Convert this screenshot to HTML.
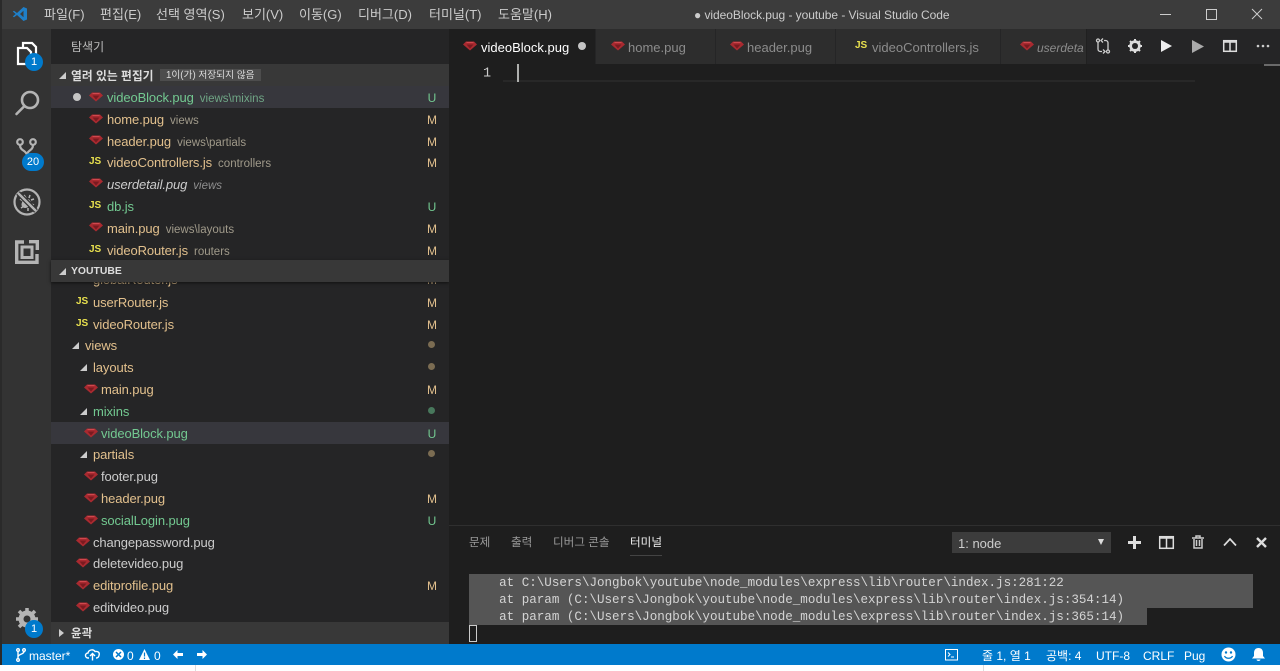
<!DOCTYPE html>
<html lang="ko"><head><meta charset="utf-8"><title>videoBlock.pug - youtube</title>
<style>
html,body{margin:0;padding:0;width:1280px;height:671px;overflow:hidden;background:#fff}
body{position:relative;font-family:"Liberation Sans","Noto Sans CJK KR",sans-serif;font-size:13px;color:#ccc}
.a{position:absolute}
.t{position:absolute;white-space:nowrap;line-height:18px}
.m{position:absolute;top:6px;font-size:13px;line-height:18px;color:#ccc;white-space:nowrap}
.r{position:absolute;left:51px;width:398px;height:22px}
.r .n{position:absolute;top:3px;line-height:18px;font-size:13px;white-space:nowrap;letter-spacing:-.1px}
.r .d{font-size:11.5px;color:#98907f;margin-left:6px;letter-spacing:0}
.r .s{position:absolute;left:375px;top:3px;line-height:18px;font-size:12px;width:12px;text-align:center}
.y{color:#e2c08d}.g{color:#73c991}.w{color:#ccc}
.o{color:#e2c08d}.o .d{color:#a09a8a}
.g .d{color:#6fa585}
.dot{position:absolute;left:377px;top:7px;width:7px;height:7px;border-radius:50%;background:#7b6c52}
.gem{position:absolute;width:14px;height:10px}
.js{position:absolute;font:bold 10px/12px "Liberation Sans",sans-serif;color:#e8e04e}
.tri{position:absolute;width:0;height:0;border-style:solid;border-width:0 0 7px 7px;border-color:transparent transparent #ccc transparent}
.b{position:absolute;background:#007acc;color:#fff;border-radius:50%;text-align:center;font-size:11px;line-height:18px;width:18px;height:18px}
.tab{position:absolute;top:29px;height:35px;background:#2d2d2d;border-right:1px solid #252526;box-sizing:border-box}
.tab span{position:absolute;top:9px;line-height:18px;font-size:13px;color:#8c8c8c;white-space:nowrap}
.term{position:absolute;left:469px;font:12.56px/17px "Liberation Mono","DejaVu Sans Mono",monospace;color:#d4d4d4;white-space:pre;background:#555;height:17px}
.st{position:absolute;top:3px;line-height:18px;color:#fff;font-size:12px;white-space:nowrap}
.lb{top:534px;font-size:11.6px;color:#999}
svg{position:absolute;overflow:visible}
</style></head><body>
<svg width="0" height="0" style="position:absolute"><defs>
<symbol id="gem" viewBox="0 0 14 10"><path d="M3 .5h8L14 3.500 7 9.500 0 3.500z" fill="#a92a30"/><path d="M3.500 3.500h7L7 7.500z" fill="#7a1a20"/><path d="M3.500 1.500h7" stroke="#d0484e" stroke-width="1"/></symbol>
</defs></svg>

<div class="a" style="left:0;top:0;width:2px;height:665px;background:#2a2a2a"></div>
<!-- titlebar -->
<div class="a" style="left:2px;top:0;width:1278px;height:29px;background:#3c3c3c"></div>
<svg style="left:12px;top:6px" width="16" height="16" viewBox="0 0 16 16"><path d="M11.500 1L15 2.500v11L11.500 15 5 9l-3 2.300L.8 10.500 3.600 8 .8 5.500 2 4.700 5 7zM11.500 4.700L8 8l3.500 3.300z" fill="#1f7fc8"/></svg>
<div class="m" style="left:44px">파일(F)</div>
<div class="m" style="left:100px">편집(E)</div>
<div class="m" style="left:156px">선택 영역(S)</div>
<div class="m" style="left:242px">보기(V)</div>
<div class="m" style="left:299px">이동(G)</div>
<div class="m" style="left:358px">디버그(D)</div>
<div class="m" style="left:429px">터미널(T)</div>
<div class="m" style="left:498px">도움말(H)</div>
<div class="m" style="left:694px;font-size:12px;letter-spacing:-.05px">● videoBlock.pug - youtube - Visual Studio Code</div>
<div class="a" style="left:1160px;top:14px;width:11px;height:1px;background:#ccc"></div>
<div class="a" style="left:1206px;top:9px;width:9px;height:9px;border:1px solid #ccc"></div>
<svg style="left:1251px;top:8px" width="12" height="12"><path d="M1 1l10 10M11 1L1 11" stroke="#ccc" fill="none"/></svg>

<!-- activity bar -->
<div class="a" style="left:2px;top:29px;width:49px;height:615px;background:#333"></div>
<svg style="left:16px;top:41px" width="22" height="26" viewBox="0 0 22 26" fill="none" stroke="#fff" stroke-width="2.200"><path d="M2 7h9l4 4v12H2z"/><path d="M7 6V2h9l4 4v12h-4"/></svg>
<div class="b" style="left:25px;top:53px">1</div>
<svg style="left:14px;top:89px" width="26" height="28" viewBox="0 0 26 28" fill="none" stroke="#b4b4b4" stroke-width="2.600"><circle cx="16" cy="11" r="8"/><path d="M10.500 17L2.500 25" stroke-linecap="round"/></svg>
<svg style="left:15px;top:137px" width="24" height="26" viewBox="0 0 24 26" fill="none" stroke="#b4b4b4" stroke-width="2.200"><circle cx="5" cy="5" r="2.800"/><circle cx="18" cy="5" r="2.800"/><path d="M5 8c0 6 6 5 7 10M18 8c0 6-6 5-6 10"/></svg>
<div class="b" style="left:22px;top:153px;width:22px;height:18px;border-radius:9px">20</div>
<svg style="left:13px;top:188px" width="28" height="28" viewBox="0 0 28 28" fill="none" stroke="#b4b4b4" stroke-width="2.200"><circle cx="14" cy="14" r="12.500"/><ellipse cx="13" cy="15.500" rx="5" ry="4" fill="#b4b4b4" stroke="none" transform="rotate(-45 13 15.500)"/><path d="M17 7l-1 3M21 11l-3 1M7 11l3 2M8 20l3-2M15 23l0-3M21 17l-3-1M11 7l2 3" stroke-width="1.500"/><path d="M5 5l18 18" stroke="#333" stroke-width="5"/><path d="M5 5l18 18" stroke-width="2.400"/></svg>
<svg style="left:15px;top:240px" width="24" height="24" viewBox="0 0 24 24" fill="none" stroke="#b4b4b4" stroke-width="3.400"><path d="M9 2H1.700v20.300h20.300V14"/><path d="M14 1.700h8.300V10"/><rect x="7" y="7" width="10" height="10.500" stroke-width="3"/></svg>
<svg style="left:16px;top:608px" width="22" height="22" viewBox="0 0 22 22"><circle cx="11" cy="11" r="6.500" fill="none" stroke="#b4b4b4" stroke-width="4"/><path d="M11 0v22M0 11h22M3 3l16 16M19 3L3 19" stroke="#b4b4b4" stroke-width="3.500"/><circle cx="11" cy="11" r="3.500" fill="#333"/></svg>
<div class="b" style="left:25px;top:620px">1</div>

<!-- sidebar -->
<div class="a" style="left:51px;top:29px;width:398px;height:615px;background:#252526"></div>
<div class="t" style="left:71px;top:38px;font-size:12px;color:#bbb">탐색기</div>
<div class="a" style="left:51px;top:64px;width:398px;height:22px;background:#383838"></div>
<div class="tri" style="left:59px;top:72px"></div>
<div class="t" style="left:71px;top:67px;font-size:11.800px;font-weight:bold;color:#ddd">열려 있는 편집기</div>
<div class="a" style="left:160px;top:69px;width:101px;height:12px;background:#4d4d4d"></div>
<div class="t" style="left:166px;top:67px;font-size:9.700px;color:#ddd">1이(가) 저장되지 않음</div>

<div class="r" style="top:86px;background:#37373d"><div class="a" style="left:22px;top:7px;width:8px;height:8px;border-radius:50%;background:#c5c5c5"></div><svg class="gem" style="left:38px;top:6px"><use href="#gem" width="14" height="10"/></svg><div class="n g" style="left:56px">videoBlock.pug<span class="d">views\mixins</span></div><div class="s g">U</div></div>
<div class="r" style="top:108px"><svg class="gem" style="left:38px;top:6px"><use href="#gem" width="14" height="10"/></svg><div class="n o" style="left:56px">home.pug<span class="d">views</span></div><div class="s y">M</div></div>
<div class="r" style="top:130px"><svg class="gem" style="left:38px;top:5px"><use href="#gem" width="14" height="10"/></svg><div class="n o" style="left:56px">header.pug<span class="d">views\partials</span></div><div class="s y">M</div></div>
<div class="r" style="top:151px"><div class="js" style="left:38px;top:5px">JS</div><div class="n o" style="left:56px">videoControllers.js<span class="d">controllers</span></div><div class="s y">M</div></div>
<div class="r" style="top:173px"><svg class="gem" style="left:38px;top:5px"><use href="#gem" width="14" height="10"/></svg><div class="n w" style="left:56px;font-style:italic">userdetail.pug<span class="d" style="color:#8f8f8f">views</span></div></div>
<div class="r" style="top:195px"><div class="js" style="left:38px;top:5px">JS</div><div class="n g" style="left:56px">db.js</div><div class="s g">U</div></div>
<div class="r" style="top:217px"><svg class="gem" style="left:38px;top:5px"><use href="#gem" width="14" height="10"/></svg><div class="n o" style="left:56px">main.pug<span class="d">views\layouts</span></div><div class="s y">M</div></div>
<div class="r" style="top:239px"><div class="js" style="left:38px;top:5px">JS</div><div class="n o" style="left:56px">videoRouter.js<span class="d">routers</span></div><div class="s y">M</div></div>

<div class="r" style="top:270px;height:18px;overflow:hidden"><div class="js" style="left:25px;top:4px">JS</div><div class="n o" style="left:42px;top:1px">globalRouter.js</div><div class="s y" style="top:1px">M</div></div>
<div class="r" style="top:291px"><div class="js" style="left:25px;top:5px">JS</div><div class="n o" style="left:42px">userRouter.js</div><div class="s y">M</div></div>
<div class="r" style="top:313px"><div class="js" style="left:25px;top:5px">JS</div><div class="n o" style="left:42px">videoRouter.js</div><div class="s y">M</div></div>
<div class="r" style="top:334px"><div class="tri" style="left:21px;top:8px"></div><div class="n o" style="left:34px">views</div><div class="dot"></div></div>
<div class="r" style="top:356px"><div class="tri" style="left:29px;top:8px"></div><div class="n o" style="left:42px">layouts</div><div class="dot"></div></div>
<div class="r" style="top:378px"><svg class="gem" style="left:33px;top:6px"><use href="#gem" width="14" height="10"/></svg><div class="n o" style="left:50px">main.pug</div><div class="s y">M</div></div>
<div class="r" style="top:400px"><div class="tri" style="left:29px;top:8px"></div><div class="n g" style="left:42px">mixins</div><div class="dot" style="background:#48785c"></div></div>
<div class="r" style="top:422px;background:#37373d"><svg class="gem" style="left:33px;top:6px"><use href="#gem" width="14" height="10"/></svg><div class="n g" style="left:50px">videoBlock.pug</div><div class="s g">U</div></div>
<div class="r" style="top:443px"><div class="tri" style="left:29px;top:8px"></div><div class="n o" style="left:42px">partials</div><div class="dot"></div></div>
<div class="r" style="top:465px"><svg class="gem" style="left:33px;top:6px"><use href="#gem" width="14" height="10"/></svg><div class="n w" style="left:50px">footer.pug</div></div>
<div class="r" style="top:487px"><svg class="gem" style="left:33px;top:6px"><use href="#gem" width="14" height="10"/></svg><div class="n o" style="left:50px">header.pug</div><div class="s y">M</div></div>
<div class="r" style="top:509px"><svg class="gem" style="left:33px;top:6px"><use href="#gem" width="14" height="10"/></svg><div class="n g" style="left:50px">socialLogin.pug</div><div class="s g">U</div></div>
<div class="r" style="top:531px"><svg class="gem" style="left:25px;top:6px"><use href="#gem" width="14" height="10"/></svg><div class="n w" style="left:42px">changepassword.pug</div></div>
<div class="r" style="top:552px"><svg class="gem" style="left:25px;top:6px"><use href="#gem" width="14" height="10"/></svg><div class="n w" style="left:42px">deletevideo.pug</div></div>
<div class="r" style="top:574px"><svg class="gem" style="left:25px;top:6px"><use href="#gem" width="14" height="10"/></svg><div class="n o" style="left:42px">editprofile.pug</div><div class="s y">M</div></div>
<div class="r" style="top:596px"><svg class="gem" style="left:25px;top:6px"><use href="#gem" width="14" height="10"/></svg><div class="n w" style="left:42px">editvideo.pug</div></div>

<div class="a" style="left:51px;top:260px;width:398px;height:22px;background:#383838;box-shadow:0 1px 3px #111"></div>
<div class="tri" style="left:59px;top:268px"></div>
<div class="t" style="left:71px;top:263px;font-size:10.400px;font-weight:bold;color:#ddd">YOUTUBE</div>
<div class="a" style="left:51px;top:622px;width:398px;height:22px;background:#383838"></div>
<div class="a" style="left:59px;top:629px;width:0;height:0;border-style:solid;border-width:4px 0 4px 5px;border-color:transparent transparent transparent #ccc"></div>
<div class="t" style="left:71px;top:625px;font-size:11.500px;font-weight:bold;color:#ddd">윤곽</div>

<!-- editor -->
<div class="a" style="left:449px;top:29px;width:831px;height:615px;background:#1e1e1e"></div>
<div class="a" style="left:449px;top:29px;width:831px;height:35px;background:#252526"></div>
<div class="tab" style="left:449px;width:147px;background:#1e1e1e"><svg class="gem" style="left:14px;top:12px"><use href="#gem" width="14" height="10"/></svg><span style="left:32px;top:10px;color:#fff">videoBlock.pug</span><div class="a" style="left:129px;top:13px;width:8px;height:8px;border-radius:50%;background:#c5c5c5"></div></div>
<div class="tab" style="left:596px;width:120px"><svg class="gem" style="left:15px;top:12px"><use href="#gem" width="14" height="10"/></svg><span style="left:32px;top:10px">home.pug</span></div>
<div class="tab" style="left:716px;width:120px"><svg class="gem" style="left:14px;top:12px"><use href="#gem" width="14" height="10"/></svg><span style="left:31px;top:10px">header.pug</span></div>
<div class="tab" style="left:836px;width:165px"><div class="js" style="left:19px;top:11px">JS</div><span style="left:36px;top:10px">videoControllers.js</span></div>
<div class="tab" style="left:1001px;width:100px;overflow:hidden"><svg class="gem" style="left:19px;top:12px"><use href="#gem" width="14" height="10"/></svg><span style="left:36px;top:10px;font-style:italic;font-size:12px">userdeta</span></div>
<div class="a" style="left:1086px;top:29px;width:194px;height:35px;background:#252526"></div>
<svg style="left:1095px;top:38px" width="16" height="16" viewBox="0 0 16 16" fill="none" stroke="#ccc" stroke-width="1.300"><circle cx="3" cy="2.500" r="1.500"/><circle cx="13" cy="13.500" r="1.500"/><path d="M3 4v7c0 1.500 1 2.500 2.500 2.500H7M13 12V5c0-1.500-1-2.500-2.500-2.500H9M8 .5l-2 2 2 2M8 11.500l2 2-2 2"/></svg>
<svg style="left:1128px;top:39px" width="14" height="14" viewBox="0 0 14 14"><circle cx="7" cy="7" r="4.500" fill="none" stroke="#ddd" stroke-width="2.500"/><path d="M7 0v14M0 7h14M2 2l10 10M12 2L2 12" stroke="#ddd" stroke-width="2"/><circle cx="7" cy="7" r="3" fill="#252526"/></svg>
<svg style="left:1161px;top:40px" width="11" height="12"><path d="M0 0l11 6-11 6z" fill="#eee"/></svg>
<svg style="left:1192px;top:40px" width="12" height="13"><path d="M0 0l12 6.500L0 13z" fill="#aaa"/></svg>
<svg style="left:1223px;top:40px" width="14" height="12" fill="none" stroke="#ddd" stroke-width="1.500"><rect x=".7" y=".7" width="12.600" height="10.600"/><path d="M7 1v10M1 2h12"/></svg>
<svg style="left:1256px;top:44px" width="14" height="4"><circle cx="2" cy="2" r="1.300" fill="#ccc"/><circle cx="7" cy="2" r="1.300" fill="#ccc"/><circle cx="12" cy="2" r="1.300" fill="#ccc"/></svg>
<div class="a" style="left:1086px;top:29px;width:1px;height:35px;background:#202020"></div>
<div class="t" style="left:483px;top:64px;font:13.500px/18px 'Liberation Mono',monospace;color:#ccc;padding-top:0;transform:translateY(1.500px)">1</div>
<div class="a" style="left:503px;top:64px;width:692px;height:18px;box-sizing:border-box;border-bottom:2px solid #282828"></div>
<div class="a" style="left:517px;top:64px;width:1.500px;height:18px;background:#aeafad"></div>
<div class="a" style="left:1264px;top:64px;width:16px;height:2px;background:#6a6a6a"></div>

<!-- panel -->
<div class="a" style="left:449px;top:525px;width:831px;height:1px;background:#2f2f2f"></div>
<div class="t lb" style="left:469px">문제</div>
<div class="t lb" style="left:511px">출력</div>
<div class="t lb" style="left:553px">디버그 콘솔</div>
<div class="t lb" style="left:630px;color:#eee">터미널</div>
<div class="a" style="left:630px;top:555px;width:32px;height:1px;background:#444"></div>
<div class="a" style="left:952px;top:532px;width:159px;height:21px;background:#3c3c3c"></div>
<div class="t" style="left:958px;top:535px;font-size:13px;color:#ccc">1: node</div>
<div class="a" style="left:1098px;top:539px;width:0;height:0;border-style:solid;border-width:6px 3.500px 0 3.500px;border-color:#ddd transparent transparent transparent"></div>
<svg style="left:1128px;top:536px" width="13" height="13"><path d="M6.500 0v13M0 6.500h13" stroke="#ddd" stroke-width="3"/></svg>
<svg style="left:1159px;top:536px" width="15" height="13" fill="none" stroke="#ddd" stroke-width="1.500"><rect x=".7" y=".7" width="13.600" height="11.600"/><path d="M7.500 1v11M1 2h13"/></svg>
<svg style="left:1192px;top:535px" width="12" height="14" fill="none" stroke="#ccc" stroke-width="1.500"><path d="M2 4v9h8V4M0 3h12M4 3V1h4v2M4.500 5v6M7.500 5v6"/></svg>
<svg style="left:1223px;top:537px" width="14" height="10" fill="none" stroke="#ddd" stroke-width="1.700"><path d="M1 8.500L7 2l6 6.500"/></svg>
<svg style="left:1256px;top:537px" width="11" height="11"><path d="M1 1l9 9M10 1l-9 9" stroke="#ddd" stroke-width="2.400"/></svg>

<div class="term" style="top:574px;width:784px;line-height:19px">    at C:\Users\Jongbok\youtube\node_modules\express\lib\router\index.js:281:22</div>
<div class="term" style="top:591px;width:784px;line-height:19px">    at param (C:\Users\Jongbok\youtube\node_modules\express\lib\router\index.js:354:14)</div>
<div class="term" style="top:608px;width:678px;line-height:19px">    at param (C:\Users\Jongbok\youtube\node_modules\express\lib\router\index.js:365:14)</div>
<div class="a" style="left:469px;top:625px;width:6px;height:15px;border:1px solid #ccc"></div>

<!-- status bar -->
<div class="a" style="left:2px;top:644px;width:1278px;height:21px;background:#007acc"></div>
<svg style="left:16px;top:648px" width="10" height="14" fill="none" stroke="#fff" stroke-width="1.400"><circle cx="2" cy="2" r="1.300"/><circle cx="8" cy="2" r="1.300"/><circle cx="2" cy="12" r="1.300"/><path d="M2 3.500v7M8 3.500c0 3-6 2.500-6 5.500"/></svg>
<div class="st" style="left:29px;top:647px">master*</div>
<svg style="left:85px;top:648px" width="15" height="13" fill="none" stroke="#fff" stroke-width="1.400"><path d="M4 10H3a2.500 2.500 0 0 1 0-5c.5-3 5-4.500 7-1.500 3-.5 5 1 4 4-.3 1.500-1.500 2.500-3 2.500"/><path d="M7.500 12.500V6M5 8l2.500-2.500L10 8"/></svg>
<svg style="left:113px;top:649px" width="11" height="11"><circle cx="5.500" cy="5.500" r="5.500" fill="#fff"/><path d="M3 3l5 5M8 3L3 8" stroke="#007acc" stroke-width="1.500"/></svg>
<div class="st" style="left:127px;top:647px">0</div>
<svg style="left:139px;top:649px" width="11" height="11"><path d="M5.500 0L11 11H0z" fill="#fff"/><path d="M5.500 3.500v4M5.500 8.500v1.500" stroke="#007acc" stroke-width="1.200"/></svg>
<div class="st" style="left:154px;top:647px">0</div>
<svg style="left:173px;top:650px" width="10" height="9"><path d="M0 4.500L4.500 0v3H10v3H4.500v3z" fill="#fff"/></svg>
<svg style="left:197px;top:650px" width="10" height="9"><path d="M10 4.500L5.500 0v3H0v3h5.500v3z" fill="#fff"/></svg>
<svg style="left:945px;top:649px" width="13" height="12" fill="none" stroke="#fff"><rect x=".5" y=".5" width="12" height="10.500"/><path d="M3 3.500l2 2-2 2M6 8h3"/></svg>
<div class="st" style="left:982px;top:647px">줄 1, 열 1</div>
<div class="st" style="left:1046px;top:647px">공백: 4</div>
<div class="st" style="left:1096px;top:647px">UTF-8</div>
<div class="st" style="left:1143px;top:647px">CRLF</div>
<div class="st" style="left:1184px;top:647px">Pug</div>
<svg style="left:1221px;top:647px" width="15" height="15"><circle cx="7.500" cy="7.500" r="7" fill="#fff"/><circle cx="5" cy="5.500" r="1.200" fill="#007acc"/><circle cx="10" cy="5.500" r="1.200" fill="#007acc"/><path d="M3.500 9c1.500 3 6.500 3 8 0" fill="none" stroke="#007acc" stroke-width="1.300"/></svg>
<svg style="left:1252px;top:648px" width="13" height="14"><path d="M6.500 0c3 0 4.500 2 4.500 5v3l2 2.500H0L2 8V5c0-3 1.500-5 4.500-5zM4.500 11.500h4c0 2-4 2-4 0z" fill="#fff"/></svg>
<div class="a" style="left:195px;top:665px;width:1px;height:6px;background:#ddd"></div>
<div class="a" style="left:983px;top:665px;width:1px;height:6px;background:#ddd"></div>
</body></html>
